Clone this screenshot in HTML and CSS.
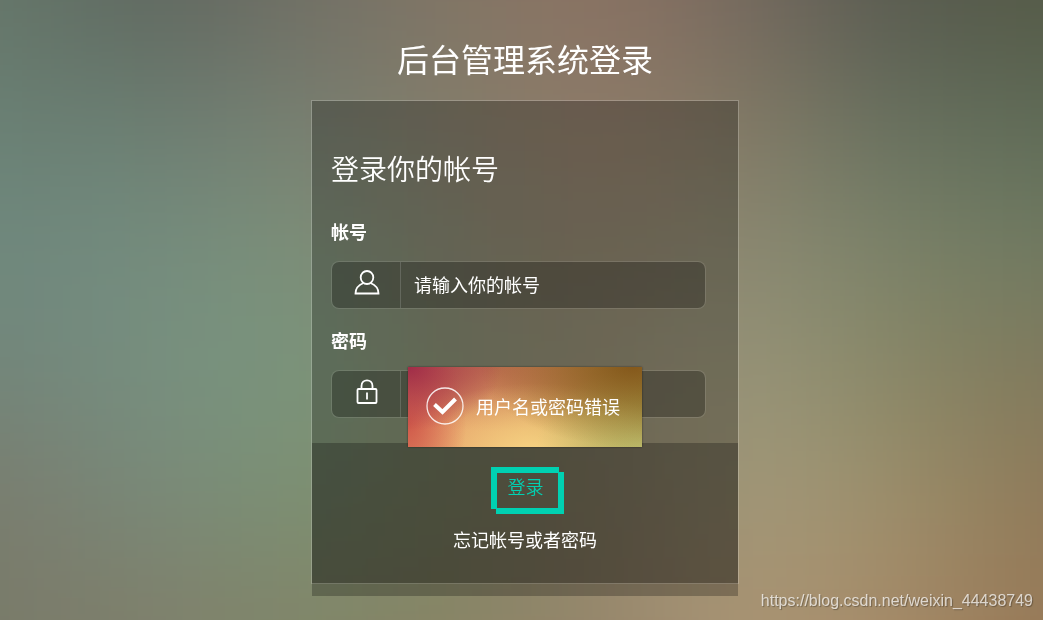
FILE: index.html
```html
<!DOCTYPE html>
<html lang="zh-CN">
<head>
    <meta charset="UTF-8">
    <meta name="viewport" content="width=device-width, initial-scale=1.0">
    <title>后台管理系统登录</title>
    <link rel="stylesheet" href="styles.css">
</head>
<body>
    <svg class="backdrop" id="backdrop" viewBox="0 0 7 5" preserveAspectRatio="none" aria-hidden="true">
        <defs>
            <filter id="soften" filterUnits="userSpaceOnUse" x="-2" y="-2" width="11" height="9" color-interpolation-filters="sRGB">
                <feGaussianBlur stdDeviation="0.5"/>
            </filter>
        </defs>
        <g id="patches" filter="url(#soften)"></g>
    </svg>
    <main class="page">
        <h1 class="page-title">后台管理系统登录</h1>
        <form class="login">
            <div class="login-body">
                <h2 class="login-title">登录你的帐号</h2>
                <label class="login-label" for="username">帐号</label>
                <div class="field">
                    <span class="field-icon">
                        <svg width="26" height="26" viewBox="0 0 26 26" fill="none" stroke="#fff" stroke-width="1.800">
                            <ellipse cx="13" cy="7.500" rx="6.300" ry="6.500"/>
                            <path d="M9.500 13C4.500 15 1.500 18 1.500 23.500H24.500C24.500 18 21.500 15 16.500 13"/>
                        </svg>
                    </span>
                    <input type="text" id="username" name="username" placeholder="请输入你的帐号">
                </div>
                <label class="login-label" for="password">密码</label>
                <div class="field">
                    <span class="field-icon">
                        <svg width="26" height="26" viewBox="0 0 26 26" fill="none" stroke="#fff" stroke-width="1.800">
                            <path d="M7.500 10V7C7.500 -0.500 18.500 -0.500 18.500 7V10"/>
                            <rect x="3.500" y="10" width="19" height="14" rx="1"/>
                            <path d="M13 13.500V20.500"/>
                        </svg>
                    </span>
                    <input type="password" id="password" name="password">
                </div>
            </div>
            <div class="login-footer">
                <button type="submit" class="login-button">登录</button>
                <a class="forgot" href="#">忘记帐号或者密码</a>
            </div>
            <div class="message" role="alert">
                <svg width="38" height="38" viewBox="0 0 38 38" fill="none" stroke="#fff">
                    <circle cx="19" cy="19" r="18" stroke-width="1.300" opacity="0.850"/>
                    <path d="M8.500 17.500L16.500 25L29.500 12" stroke-width="4"/>
                </svg>
                <span>用户名或密码错误</span>
            </div>
        </form>
    </main>
    <div class="watermark">https://blog.csdn.net/weixin_44438749</div>

    <script>
        // colour patches of the backdrop, one row per line; the filter blends them
        const rows = [
            ['#66776a', '#5d665e', '#706f65', '#807565', '#8c7262', '#75695f', '#575a50', '#555a46'],
            ['#6a8074', '#6b7e72', '#777f72', '#837d6a', '#907b69', '#837a65', '#66705f', '#5f6b57'],
            ['#6f887e', '#748c7e', '#7c9079', '#858470', '#8e816b', '#8c8a73', '#7a8269', '#6f7a61'],
            ['#72857a', '#778f80', '#7a967c', '#84896f', '#918a72', '#98957a', '#888766', '#80795c'],
            ['#7a7c6e', '#79897a', '#7b9173', '#848a69', '#92866c', '#a39a7b', '#9c8f6b', '#8f7a59'],
            ['#787a69', '#807f6b', '#80866a', '#868363', '#96856c', '#ab9574', '#a68a68', '#967856']
        ];
        const patches = document.getElementById('patches');

        function addPatch(x, y, color) {
            const rect = document.createElementNS('http://www.w3.org/2000/svg', 'rect');
            rect.setAttribute('x', x - 0.51);
            rect.setAttribute('y', y - 0.51);
            rect.setAttribute('width', 1.02);
            rect.setAttribute('height', 1.02);
            rect.setAttribute('fill', color);
            patches.appendChild(rect);
        }

        // repeat the outer patches past the edges so that they don't fade out
        for (let y = -1; y <= 6; y++) {
            for (let x = -1; x <= 8; x++) {
                const row = rows[Math.min(Math.max(y, 0), 5)];
                addPatch(x, y, row[Math.min(Math.max(x, 0), 7)]);
            }
        }
    </script>
</body>
</html>
```
FILE: styles.css
```css
* {
    box-sizing: border-box;
}

body {
    position: relative;
    margin: 0;
    min-height: 100vh;
    font-family: "Noto Sans CJK SC", sans-serif;
    font-size: 18px;
    line-height: 24px;
    color: #fff;
    background-color: #86836a;
}

.backdrop {
    position: fixed;
    top: 0;
    left: 0;
    z-index: -1;
    width: 100%;
    height: 100%;
}

.page {
    display: flex;
    flex-direction: column;
    align-items: center;
    padding: 34px 0 0 7px;
}

.page-title {
    margin: 0 0 18px;
    font-size: 32px;
    font-weight: 400;
    line-height: 48px;
}

.login {
    position: relative;
    width: 100%;
    max-width: 428px;
    border: 1px solid rgba(255, 255, 255, 0.2);
    background-color: rgba(0, 0, 0, 0.25);
    background-clip: padding-box;
}

.login-body {
    padding: 47px 32px 25px 19px;
}

.login-title {
    margin: 0 0 31px;
    font-size: 28px;
    font-weight: 350;
    line-height: 40px;
}

.login-label {
    display: block;
    margin-bottom: 18px;
    font-weight: 700;
}

.field {
    display: flex;
    height: 48px;
    margin-bottom: 19px;
    border: 1px solid rgba(255, 255, 255, 0.1);
    border-radius: 8px;
    background-color: rgba(0, 0, 0, 0.25);
    background-clip: padding-box;
}

.field:last-child {
    margin-bottom: 0;
}

.field-icon {
    display: flex;
    justify-content: center;
    width: 69px;
    padding: 8px 0 0 2px;
    border-right: 1px solid rgba(255, 255, 255, 0.15);
}

.field input {
    flex: 1;
    min-width: 0;
    padding: 0 13px 3px;
    border: 0;
    outline: none;
    background: none;
    color: #fff;
    font: inherit;
}

.field input::placeholder {
    color: #fff;
    opacity: 1;
}

/* runs a little past the bottom edge of the form */
.login-footer {
    display: flex;
    flex-direction: column;
    align-items: center;
    margin-bottom: -13px;
    padding: 24px 0 45px;
    background-color: rgba(0, 0, 0, 0.25);
}

.login-button {
    margin: 0 0 13px 4px;
    padding: 7px 20px 16px 17px;
    border: 0;
    color: #00d1b2;
    font: inherit;
    font-weight: 350;
    cursor: pointer;
    /* two overlapping corners: top-left and bottom-right */
    background:
        linear-gradient(#00d1b2, #00d1b2) 0 0 / 68px 6px no-repeat,
        linear-gradient(#00d1b2, #00d1b2) 0 0 / 6px 42px no-repeat,
        linear-gradient(#00d1b2, #00d1b2) 100% 100% / 68px 6px no-repeat,
        linear-gradient(#00d1b2, #00d1b2) 100% 100% / 6px 42px no-repeat;
}

.forgot {
    color: #fff;
    text-decoration: none;
}

.message {
    position: absolute;
    top: 266px;
    left: 50%;
    display: flex;
    align-items: center;
    gap: 12px;
    height: 80px;
    padding: 0 22px 2px 18px;
    transform: translateX(-50%);
    white-space: nowrap;
    box-shadow: 0 0 2px rgba(0, 0, 0, 0.5);
    background-color: #e0a565;
    background-image:
        radial-gradient(ellipse 40% 80% at 0% 0%, #a02c48, rgba(160, 44, 72, 0)),
        radial-gradient(ellipse 65% 100% at 96% 0%, #85591c, rgba(133, 89, 28, 0)),
        radial-gradient(ellipse 25% 110% at 0% 70%, #d05a4a, rgba(208, 90, 74, 0)),
        radial-gradient(ellipse 45% 100% at 100% 100%, #bab868, rgba(186, 184, 104, 0)),
        radial-gradient(ellipse 60% 90% at 55% 110%, #f8d584, rgba(248, 213, 132, 0)),
        radial-gradient(ellipse 70% 80% at 35% 0%, #bc6c50, rgba(188, 108, 80, 0)),
        linear-gradient(90deg, #e6946a, #e0a565 50%, #a0903c);
}

.watermark {
    position: absolute;
    right: 10px;
    bottom: 7px;
    font-family: "Liberation Sans", Arial, sans-serif;
    font-size: 16px;
    line-height: 24px;
    color: rgba(255, 255, 255, 0.7);
    text-shadow: 1px 1px 1px rgba(0, 0, 0, 0.3);
}
```
